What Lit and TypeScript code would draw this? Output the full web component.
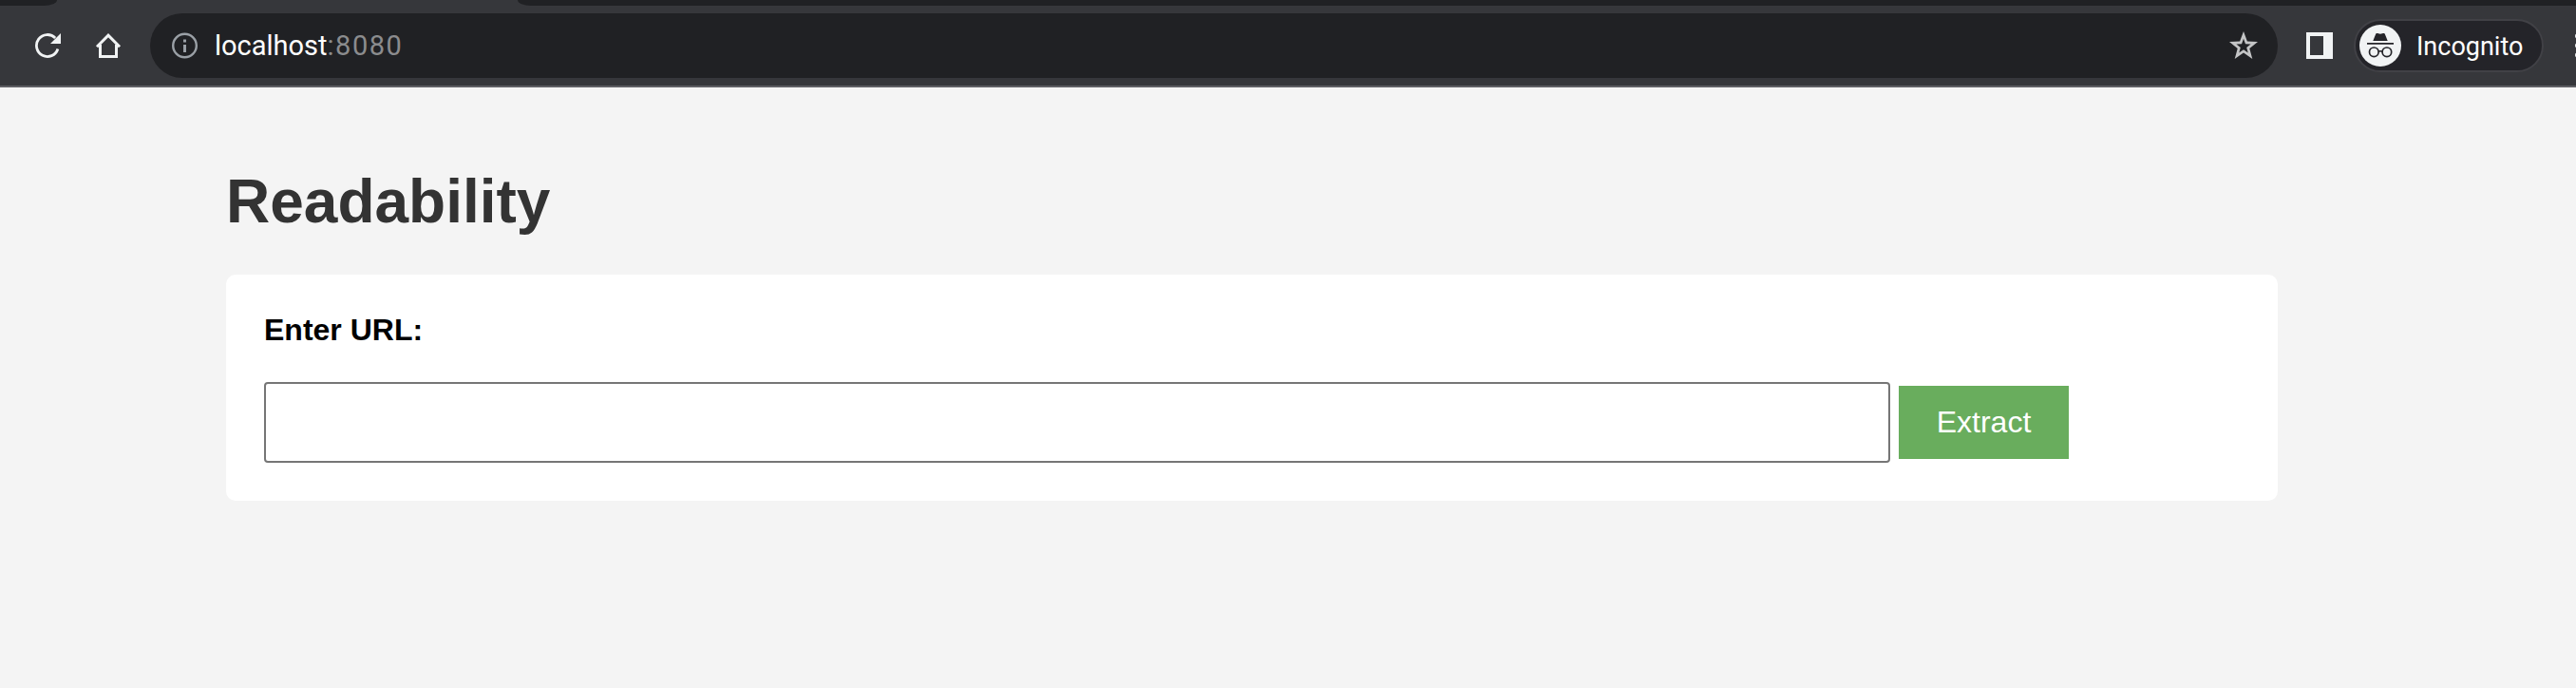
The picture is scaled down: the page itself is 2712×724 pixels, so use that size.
import { LitElement, html, css } from "lit";
import { customElement } from "lit/decorators.js";

@customElement("browser-toolbar")
class BrowserToolbar extends LitElement {
  static styles = css`
    :host { display: block; font-family: Roboto, sans-serif; }
    svg { display: block; flex: none; }
    .tabs { display: flex; height: 6px; background: #36373b; overflow: hidden; }
    .left-edge { width: 60px; background: #202124; border-bottom-right-radius: 14px 6px; }
    .active-tab { width: 485px; }
    .rest { flex: 1; background: #202124; border-bottom-left-radius: 14px 6px; }
    .bar { display: flex; align-items: center; height: 86px; box-sizing: border-box; background: #36373b; border-bottom: 2px solid #5f5f64; overflow: hidden; }
    .reload { margin-left: 36px; }
    .home { margin-left: 36px; }
    .address { display: flex; align-items: center; box-sizing: border-box; flex: none; width: 2240px; height: 68px; margin: 0 0 0 30px; border-radius: 34px; background: #202124; padding: 0 21px 0 22px; }
    .url { flex: 1; margin-left: 17px; color: #fff; font-size: 29px; line-height: 34px; white-space: nowrap; }
    .port { color: #8b8c8e; letter-spacing: 1.5px; }
    .panel { margin-left: 30px; }
    .profile { display: flex; align-items: center; box-sizing: border-box; flex: none; width: 200px; height: 56px; margin-left: 22px; padding-left: 4px; border: 2px solid #414146; border-radius: 28px; background: #242429; color: #fff; font-size: 27px; }
    .name { margin-left: 16px; padding-top: 2px; line-height: 34px; }
    .menu { margin-left: 33px; }
  `;
  render() {
    return html`
      <div class="tabs"><div class="left-edge"></div><div class="active-tab"></div><div class="rest"></div></div>
      <div class="bar">
        <svg class="reload" width="28" height="28" viewBox="0 0 28 28"><path d="M22.2 6A11.500 11.500 0 1 0 24.900 17.500" fill="none" stroke="#f1f3f4" stroke-width="2.800"/><path d="M28 1v11H17z" fill="#f1f3f4"/></svg>
        <svg class="home" width="28" height="28" viewBox="0 0 28 28"><path d="M2 15.300 14 3.200 26 15.300M5.500 13v12.500h17V13" fill="none" stroke="#f1f3f4" stroke-width="3"/></svg>
        <div class="address">
          <svg width="29" height="28" viewBox="0 0 29 28"><circle cx="14.5" cy="14" r="12.3" fill="none" stroke="#9aa0a6" stroke-width="2.4"/><path d="M13 7.5h3v3h-3zM13 13h3v8h-3z" fill="#9aa0a6"/></svg>
          <div class="url">localhost<span class="port">:8080</span></div>
          <svg width="30" height="30" viewBox="0 0 30 30"><path fill-rule="evenodd" d="m15 0 3.900 10.500L30 11l-8.700 6.900L24.300 29 15 22.600 5.700 29l3-11.100L0 11l11.100-.5zM15 7.800l-2 5.400-5.600.3 4.400 3.500-1.500 5.500 4.700-3.200 4.700 3.200-1.500-5.500 4.400-3.500-5.600-.3z" fill="#c4c5c6"/></svg>
        </div>
        <svg class="panel" width="28" height="28" viewBox="0 0 28 28"><path fill-rule="evenodd" d="M0 0h28v28H0zM4 4v20h14V4z" fill="#f1f3f4"/></svg>
        <div class="profile">
          <svg width="44" height="44" viewBox="0 0 44 44"><circle cx="22" cy="22" r="22" fill="#f1f3f4"/><g fill="#242429"><path d="M14.300 17 17.300 9.500Q17.800 8.600 19 9l3 .8 3-.8q1.200-.4 1.700.5L29.700 17zM8 19h28v1.800H8z"/></g><g fill="none" stroke="#242429" stroke-width="1.700"><circle cx="15.300" cy="28.800" r="4.800"/><circle cx="28.900" cy="28.800" r="4.800"/><path d="M20 28.500q2.100-1.500 4.200 0"/></g></svg>
          <span class="name">Incognito</span>
        </div>
        <svg class="menu" width="6" height="28" viewBox="0 0 6 28"><g fill="#f1f3f4"><circle cx="2.500" cy="4" r="2.500"/><circle cx="2.500" cy="14" r="2.500"/><circle cx="2.500" cy="24" r="2.500"/></g></svg>
      </div>`;
  }
}

@customElement("app-root")
class AppRoot extends LitElement {
  static styles = css`
    :host { display: block; box-sizing: border-box; height: 724px; overflow: hidden; background: #f4f4f4; font-family: "Liberation Sans", Arial, sans-serif; }
    main { width: 2160px; margin-left: 238px; padding-top: 83px; }
    h1 { margin: 0; height: 114px; color: #333; font-size: 64px; line-height: 74px; font-weight: 700; }
    form { box-sizing: border-box; height: 238px; padding: 40px; border-radius: 10px; background: #fff; }
    label { display: block; height: 73px; color: #000; font-size: 32px; line-height: 37px; font-weight: 700; }
    .row { display: flex; align-items: center; gap: 9px; }
    input { box-sizing: border-box; width: 1712px; height: 85px; border: 2px solid #767676; border-radius: 4px; background: #fff; padding: 20px; font: 32px "Liberation Sans", sans-serif; outline: none; }
    button { width: 179px; height: 77px; padding: 0; border: 0; border-radius: 0; background: #69ad5d; color: #fff; font: 32px "Liberation Sans", Arial, sans-serif; white-space: nowrap; }
  `;
  render() {
    return html`
      <browser-toolbar></browser-toolbar>
      <main>
        <h1>Readability</h1>
        <form>
          <label for="url">Enter URL:</label>
          <div class="row"><input id="url" type="text"><button type="button">Extract</button></div>
        </form>
      </main>`;
  }
}
